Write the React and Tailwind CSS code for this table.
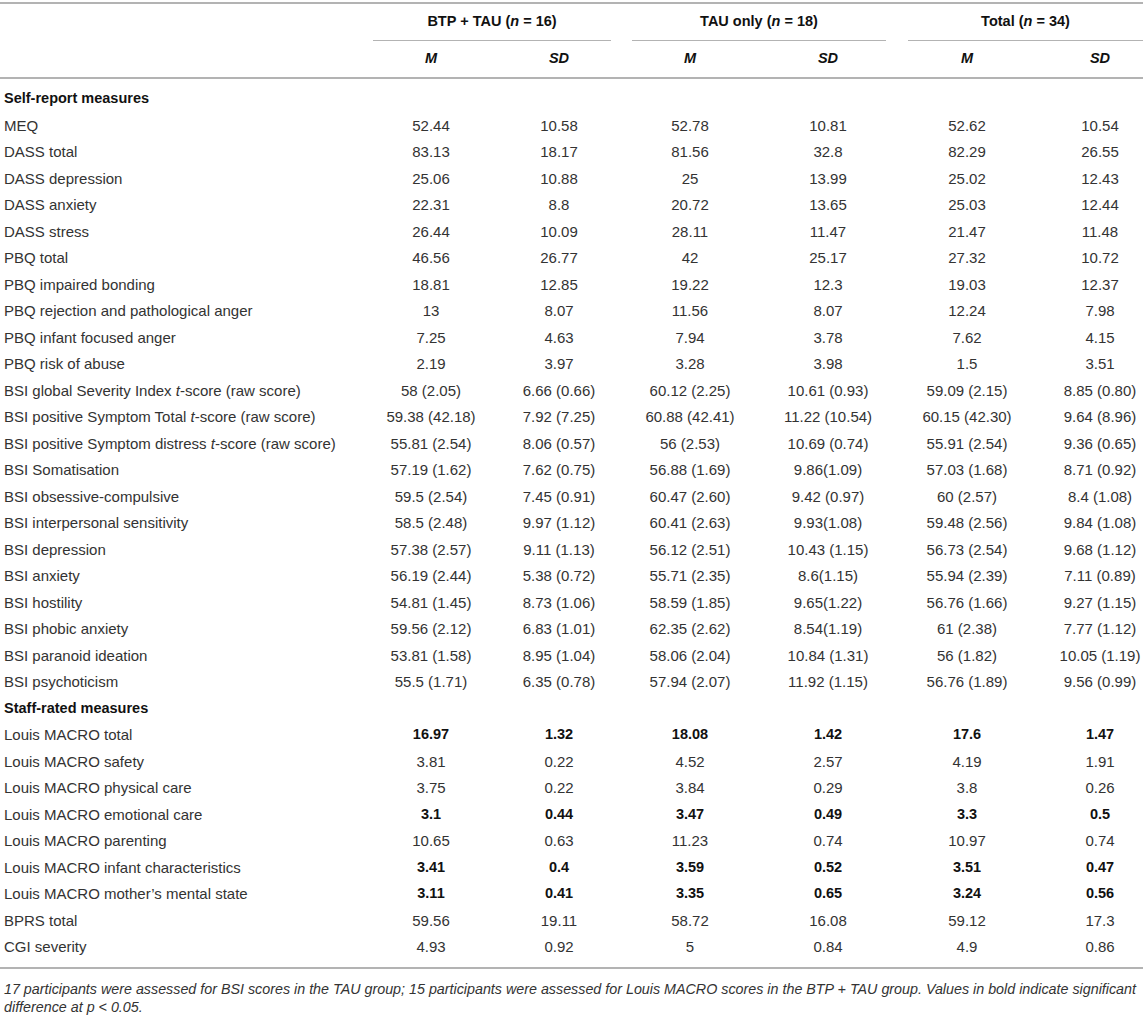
import React from "react";

const GRID = "grid grid-cols-[367px_128px_128px_134px_142px_136px_108px]";

const T = () => <span className="italic">t</span>;

const selfReport = [
  ["MEQ", "52.44", "10.58", "52.78", "10.81", "52.62", "10.54"],
  ["DASS total", "83.13", "18.17", "81.56", "32.8", "82.29", "26.55"],
  ["DASS depression", "25.06", "10.88", "25", "13.99", "25.02", "12.43"],
  ["DASS anxiety", "22.31", "8.8", "20.72", "13.65", "25.03", "12.44"],
  ["DASS stress", "26.44", "10.09", "28.11", "11.47", "21.47", "11.48"],
  ["PBQ total", "46.56", "26.77", "42", "25.17", "27.32", "10.72"],
  ["PBQ impaired bonding", "18.81", "12.85", "19.22", "12.3", "19.03", "12.37"],
  ["PBQ rejection and pathological anger", "13", "8.07", "11.56", "8.07", "12.24", "7.98"],
  ["PBQ infant focused anger", "7.25", "4.63", "7.94", "3.78", "7.62", "4.15"],
  ["PBQ risk of abuse", "2.19", "3.97", "3.28", "3.98", "1.5", "3.51"],
  [<>BSI global Severity Index <T />-score (raw score)</>, "58 (2.05)", "6.66 (0.66)", "60.12 (2.25)", "10.61 (0.93)", "59.09 (2.15)", "8.85 (0.80)"],
  [<>BSI positive Symptom Total <T />-score (raw score)</>, "59.38 (42.18)", "7.92 (7.25)", "60.88 (42.41)", "11.22 (10.54)", "60.15 (42.30)", "9.64 (8.96)"],
  [<>BSI positive Symptom distress <T />-score (raw score)</>, "55.81 (2.54)", "8.06 (0.57)", "56 (2.53)", "10.69 (0.74)", "55.91 (2.54)", "9.36 (0.65)"],
  ["BSI Somatisation", "57.19 (1.62)", "7.62 (0.75)", "56.88 (1.69)", "9.86(1.09)", "57.03 (1.68)", "8.71 (0.92)"],
  ["BSI obsessive-compulsive", "59.5 (2.54)", "7.45 (0.91)", "60.47 (2.60)", "9.42 (0.97)", "60 (2.57)", "8.4 (1.08)"],
  ["BSI interpersonal sensitivity", "58.5 (2.48)", "9.97 (1.12)", "60.41 (2.63)", "9.93(1.08)", "59.48 (2.56)", "9.84 (1.08)"],
  ["BSI depression", "57.38 (2.57)", "9.11 (1.13)", "56.12 (2.51)", "10.43 (1.15)", "56.73 (2.54)", "9.68 (1.12)"],
  ["BSI anxiety", "56.19 (2.44)", "5.38 (0.72)", "55.71 (2.35)", "8.6(1.15)", "55.94 (2.39)", "7.11 (0.89)"],
  ["BSI hostility", "54.81 (1.45)", "8.73 (1.06)", "58.59 (1.85)", "9.65(1.22)", "56.76 (1.66)", "9.27 (1.15)"],
  ["BSI phobic anxiety", "59.56 (2.12)", "6.83 (1.01)", "62.35 (2.62)", "8.54(1.19)", "61 (2.38)", "7.77 (1.12)"],
  ["BSI paranoid ideation", "53.81 (1.58)", "8.95 (1.04)", "58.06 (2.04)", "10.84 (1.31)", "56 (1.82)", "10.05 (1.19)"],
  ["BSI psychoticism", "55.5 (1.71)", "6.35 (0.78)", "57.94 (2.07)", "11.92 (1.15)", "56.76 (1.89)", "9.56 (0.99)"],
];

const staff = [
  ["Louis MACRO total", "16.97", "1.32", "18.08", "1.42", "17.6", "1.47", true],
  ["Louis MACRO safety", "3.81", "0.22", "4.52", "2.57", "4.19", "1.91"],
  ["Louis MACRO physical care", "3.75", "0.22", "3.84", "0.29", "3.8", "0.26"],
  ["Louis MACRO emotional care", "3.1", "0.44", "3.47", "0.49", "3.3", "0.5", true],
  ["Louis MACRO parenting", "10.65", "0.63", "11.23", "0.74", "10.97", "0.74"],
  ["Louis MACRO infant characteristics", "3.41", "0.4", "3.59", "0.52", "3.51", "0.47", true],
  ["Louis MACRO mother\u2019s mental state", "3.11", "0.41", "3.35", "0.65", "3.24", "0.56", true],
  ["BPRS total", "59.56", "19.11", "58.72", "16.08", "59.12", "17.3"],
  ["CGI severity", "4.93", "0.92", "5", "0.84", "4.9", "0.86"],
];

function Row({ r }) {
  const bold = r[7] === true;
  const vals = r.slice(1, 7);
  return (
    <div className={`${GRID} h-[26.5px] items-center`}>
      <div className="pl-[4px] whitespace-nowrap">{r[0]}</div>
      {vals.map((v, i) => (
        <div
          key={i}
          className={`text-center whitespace-nowrap ${i === 5 ? "pl-[22px]" : ""} ${bold ? "font-bold text-[14.5px] text-[#111]" : ""}`}
        >
          {v}
        </div>
      ))}
    </div>
  );
}

function Section({ title }) {
  return (
    <div className="h-[26.5px] flex items-center pl-[4px] font-bold text-[14.5px] text-[#111]">
      <span>{title}</span>
    </div>
  );
}

export default function App() {
  return (
    <div
      className="w-[1143px] h-[1017px] bg-white text-[15px] text-[#333] overflow-hidden"
      style={{ fontFamily: '"Liberation Sans", Arial, sans-serif' }}
    >
      <div className="pt-[2px]">
        <div className="border-t-2 border-b-2 border-[#b3b3b3]">
          {/* header row 1 */}
          <div className={`${GRID} font-bold text-[14.5px] text-[#111]`}>
            <div></div>
            <div className="col-span-2 flex flex-col">
              <div className="h-[36px] flex items-center justify-center">
                <span className="ml-[-6px]">BTP + TAU (<span className="italic">n</span> = 16)</span>
              </div>
              <div className="h-px bg-[#b3b3b3] ml-[6px] mr-[12px]"></div>
            </div>
            <div className="col-span-2 flex flex-col">
              <div className="h-[36px] flex items-center justify-center">
                <span className="ml-[-4px]">TAU only (<span className="italic">n</span> = 18)</span>
              </div>
              <div className="h-px bg-[#b3b3b3] ml-[9px] mr-[13px]"></div>
            </div>
            <div className="col-span-2 flex flex-col">
              <div className="h-[36px] flex items-center justify-center pl-[9px]">
                <span>Total (<span className="italic">n</span> = 34)</span>
              </div>
              <div className="h-px bg-[#b3b3b3] ml-[9px]"></div>
            </div>
          </div>
          {/* header row 2 */}
          <div className={`${GRID} h-[38px] items-center font-bold italic text-[14.5px] text-[#111] border-b-2 border-[#b3b3b3]`}>
            <div></div>
            <div className="text-center">M</div>
            <div className="text-center">SD</div>
            <div className="text-center">M</div>
            <div className="text-center">SD</div>
            <div className="text-center">M</div>
            <div className="text-center pl-[22px]">SD</div>
          </div>
          {/* body */}
          <div className="pt-[7px] pb-[6px]">
            <Section title="Self-report measures" />
            {selfReport.map((r, i) => (
              <Row key={i} r={r} />
            ))}
            <Section title="Staff-rated measures" />
            {staff.map((r, i) => (
              <Row key={i} r={r} />
            ))}
          </div>
        </div>
        <div className="mt-[11px] pl-[4px] italic leading-[18px] text-[#333] text-[14.3px] whitespace-nowrap">
          17 participants were assessed for BSI scores in the TAU group; 15 participants were assessed for Louis MACRO scores in the BTP + TAU group. Values in bold indicate significant
          <br />
          difference at p &lt; 0.05.
        </div>
      </div>
    </div>
  );
}
